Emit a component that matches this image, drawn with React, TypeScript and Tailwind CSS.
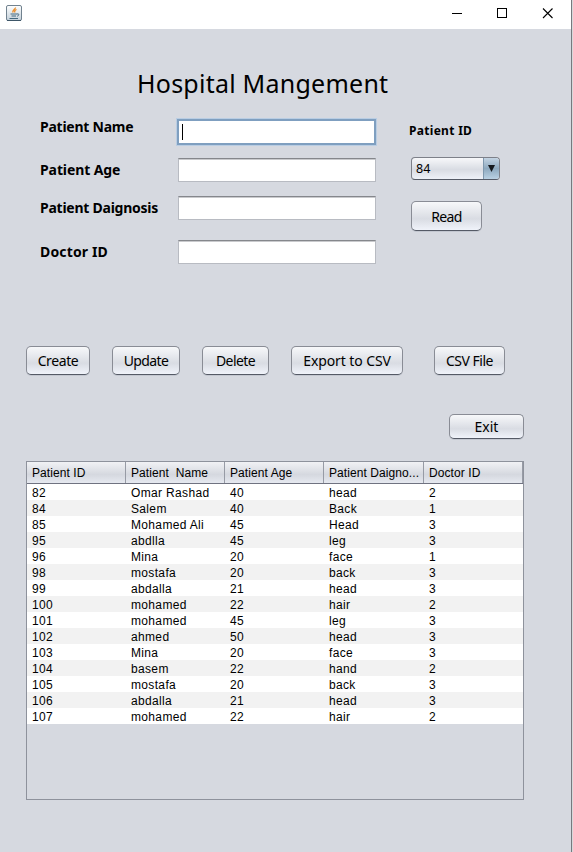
import type { ReactNode } from "react";

const headers = ["Patient ID", "Patient  Name", "Patient Age", "Patient Daigno...", "Doctor ID"];

const rows = [
  ["82", "Omar Rashad", "40", "head", "2"],
  ["84", "Salem", "40", "Back", "1"],
  ["85", "Mohamed Ali", "45", "Head", "3"],
  ["95", "abdlla", "45", "leg", "3"],
  ["96", "Mina", "20", "face", "1"],
  ["98", "mostafa", "20", "back", "3"],
  ["99", "abdalla", "21", "head", "3"],
  ["100", "mohamed", "22", "hair", "2"],
  ["101", "mohamed", "45", "leg", "3"],
  ["102", "ahmed", "50", "head", "3"],
  ["103", "Mina", "20", "face", "3"],
  ["104", "basem", "22", "hand", "2"],
  ["105", "mostafa", "20", "back", "3"],
  ["106", "abdalla", "21", "head", "3"],
  ["107", "mohamed", "22", "hair", "2"],
];

function Button({ className, children }: { className: string; children: ReactNode }) {
  return (
    <button
      className={`flex shrink-0 items-center justify-center whitespace-nowrap rounded-[5px] border border-[#898c95] border-b-[#555a66] bg-linear-to-b from-[#f7f8fa] via-[#d9dce3] via-60% to-[#f0f3fa] text-[14px] leading-none text-black shadow-[0_1px_0_#c3c7d0] ${className}`}
    >
      {children}
    </button>
  );
}

function Field({ className }: { className: string }) {
  return (
    <div className={`h-6 w-[198px] border border-[#b8bbc2] border-t-[#85878c] bg-white shadow-[inset_0_1px_0_#c9cacd] ${className}`} />
  );
}

function JavaIcon() {
  return (
    <svg width="16" height="16" viewBox="0 0 16 16" fill="none">
      <defs>
        <linearGradient id="tile" x1="0" y1="0" x2="0" y2="1">
          <stop offset="0" stopColor="#ffffff" />
          <stop offset="1" stopColor="#c3d0da" />
        </linearGradient>
      </defs>
      <rect x="0.5" y="0.5" width="15" height="15" rx="1.5" fill="url(#tile)" stroke="#71828f" />
      <path d="M1 15.5h14" stroke="#3e5668" />
      <path d="M9.500 2.500C9.800 4 6 5 7 7.500M10.500 4.500C8.800 5.300 8.200 6 9 7.500" stroke="#ea8a24" strokeWidth="1.300" />
      <path d="M4.500 9h6.500M5.500 11h4.500M3.500 13.500h8.500M11 9c2.400-.8 2.400 1.600.2 2.200" stroke="#44687f" />
    </svg>
  );
}

export default function App() {
  return (
    <div className="flex h-[852px] w-[573px] overflow-hidden bg-[#d6d9e0] font-['Noto_Sans',sans-serif] text-black">
      <div className="flex w-[571px] flex-col">
        <header className="flex h-[29px] items-start justify-between bg-white pl-[6px]">
          <div className="pt-[5px]">
            <JavaIcon />
          </div>
          <svg width="119" height="29" viewBox="0 0 119 29" fill="none" stroke="#000">
            <path d="M0 13.500h10" />
            <rect x="45.500" y="8.500" width="9" height="9" />
            <path d="M91 8.500l9.500 9.500M100.500 8.500l-9.500 9.500" strokeWidth="1.100" />
          </svg>
        </header>

        <h1 className="mt-[35px] ml-[137px] h-[38px] whitespace-nowrap text-[25px] leading-[38px] tracking-[0.24px]">
          Hospital Mangement
        </h1>

        <section className="flex h-[244px] pt-[15px] pl-10">
          <div className="flex w-[137px] flex-col whitespace-nowrap text-[14px] leading-5 font-bold">
            <div className="-mt-px h-[43px] pt-px tracking-[-0.25px]">Patient Name</div>
            <div className="h-[38px] pt-px tracking-[-0.1px]">Patient Age</div>
            <div className="h-11 pt-px tracking-[-0.25px]">Patient Daignosis</div>
            <div className="pt-px tracking-[0.15px]">Doctor ID</div>
          </div>
          <div className="w-[232px] pt-[2px]">
            <div className="h-[26px] w-[199px] border-2 border-[#7f9fc0] bg-white pt-[3px] pl-[3px] shadow-[0_0_0_1px_#b9cde3]">
              <div className="h-4 w-px bg-black" />
            </div>
            <Field className="mt-[13px] ml-px" />
            <Field className="mt-[14px] ml-px" />
            <Field className="mt-[20px] ml-px" />
          </div>
          <div className="flex flex-col items-start">
            <div className="mt-1 h-[36px] whitespace-nowrap text-[12px] leading-5 font-bold tracking-[0.3px]">Patient ID</div>
            <div className="ml-[2px] flex h-[23px] w-[89px] overflow-hidden rounded-[4px] border border-[#7d8089] border-b-[#555a66] bg-linear-to-b from-[#f7f8fa] via-[#d9dce3] via-55% to-[#eef1f8]">
              <span className="flex-1 pl-[4px] text-[12.5px] leading-[22px]">84</span>
              <span className="flex w-4 items-start justify-center border-l border-[#7f98ae] bg-linear-to-b from-[#c4d4e3] via-[#8ea9bf] via-50% to-[#bad1e3] pt-[7px]">
                <svg width="7" height="7" viewBox="0 0 7 7">
                  <path d="M0 0h7L3.500 7z" fill="#15191e" />
                </svg>
              </span>
            </div>
            <Button className="mt-[21px] ml-[2px] h-[30px] w-[71px] pt-px tracking-[-0.6px]">Read</Button>
          </div>
        </section>

        <section className="flex h-[29px] pl-[26px]">
          <Button className="h-[29px] w-16 tracking-[-0.4px]">Create</Button>
          <Button className="ml-[22px] h-[29px] w-[68px] tracking-[-0.6px]">Update</Button>
          <Button className="ml-[22px] h-[29px] w-[67px] tracking-[-0.6px]">Delete</Button>
          <Button className="ml-[22px] h-[29px] w-28 tracking-[-0.1px]">Export to CSV</Button>
          <Button className="ml-[31px] h-[29px] w-[71px] tracking-[-0.5px]">CSV File</Button>
        </section>

        <Button className="mt-[39px] ml-[449px] h-[25px] w-[75px]">Exit</Button>

        <section className="mt-[22px] ml-[26px] h-[339px] w-[498px] shrink-0 border border-[#8e929c] font-['Liberation_Sans',Arial,sans-serif] text-[12px]">
          <div className="grid h-[22px] grid-cols-[99px_99px_99px_100px_99px] border-b border-[#6f7280] bg-linear-to-b from-[#f1f2f5] via-[#d5d8df] via-60% to-[#e6e9f0]">
            {headers.map((h) => (
              <div key={h} className="overflow-hidden border-r border-[#979ba5] pl-[5px] leading-[22px] tracking-[0.08px] whitespace-pre">
                {h}
              </div>
            ))}
          </div>
          <div>
            {rows.map((r) => (
              <div
                key={r[0]}
                className="grid h-4 grid-cols-[99px_99px_99px_100px_99px] pt-px leading-[17px] tracking-[0.34px] odd:bg-white even:bg-[#f2f2f2]"
              >
                {r.map((c, i) => (
                  <div key={i} className="pl-[5px] whitespace-nowrap">
                    {c}
                  </div>
                ))}
              </div>
            ))}
          </div>
        </section>
      </div>
      <div className="w-px bg-[#77797e]" />
      <div className="w-px bg-[#d8d8da]" />
    </div>
  );
}
